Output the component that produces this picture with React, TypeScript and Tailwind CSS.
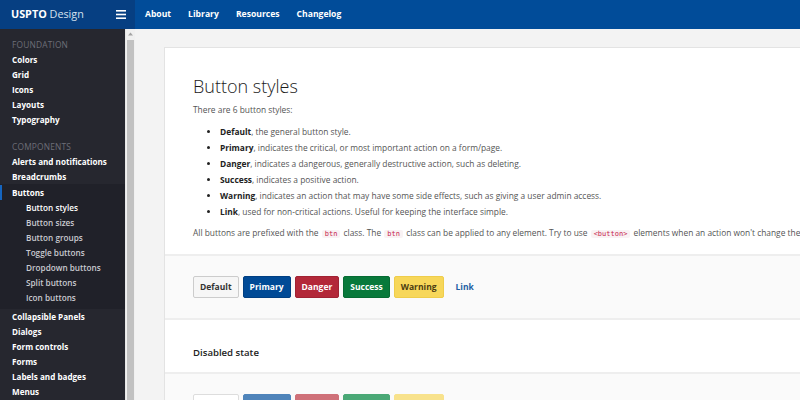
import React from "react";

const F = { fontFamily: '"Open Sans", "Noto Sans", sans-serif' };

function NavItem({ label, sub = false, active = false }: { label: string; sub?: boolean; active?: boolean }) {
  return (
    <div
      className={
        "h-[15px] leading-[15px] whitespace-nowrap " +
        (sub
          ? "pl-[26px] text-[8.2px] font-semibold " + (active ? "text-white" : "text-[#c9cad0]")
          : "pl-[12px] text-[8.1px] font-bold text-white")
      }
    >
      {label}
    </div>
  );
}

function Heading({ label }: { label: string }) {
  return (
    <div className="h-[15px] leading-[15px] pl-[12px] text-[8.4px] uppercase text-[#6d6e77] tracking-[0.02em]">{label}</div>
  );
}

function Btn({ label, cls }: { label: string; cls: string }) {
  return (
    <div className={"h-[22px] px-[6px] flex items-center rounded-[2px] border text-[8.5px] font-bold " + cls}>{label}</div>
  );
}

function Code({ children }: { children: React.ReactNode }) {
  return (
    <span className="px-[3px] mx-[1px] rounded-[2px] bg-[#f9f2f4] text-[#c7254e] text-[7px]" style={{ fontFamily: '"DejaVu Sans Mono", monospace' }}>
      {children}
    </span>
  );
}

export default function App() {
  return (
    <div className="w-[800px] h-[400px] overflow-hidden flex flex-col bg-[#f3f3f3]" style={F}>
      {/* Header */}
      <div className="h-[29px] flex shrink-0 bg-[#014c99]">
        <div className="w-[135px] bg-[#063f82] flex items-center pl-[11px] pr-[9px] justify-between">
          <div className="text-[10.8px] text-white whitespace-nowrap">
            <span className="font-bold">USPTO</span> <span className="text-[#d8e2ef]">Design</span>
          </div>
          <svg width="10" height="9" viewBox="0 0 10 9">
            <rect x="0" y="0" width="10" height="1.6" fill="white" />
            <rect x="0" y="3.7" width="10" height="1.6" fill="white" />
            <rect x="0" y="7.4" width="10" height="1.6" fill="white" />
          </svg>
        </div>
        <div className="flex items-center gap-[17px] pl-[10px] text-white text-[8.6px] font-bold">
          <span>About</span>
          <span>Library</span>
          <span>Resources</span>
          <span>Changelog</span>
        </div>
      </div>

      <div className="flex flex-1 min-h-0">
        {/* Sidebar */}
        <div className="w-[125px] shrink-0 bg-[#26272f] pt-[8px] overflow-hidden">
          <Heading label="Foundation" />
          <NavItem label="Colors" />
          <NavItem label="Grid" />
          <NavItem label="Icons" />
          <NavItem label="Layouts" />
          <NavItem label="Typography" />
          <div className="h-[12px]" />
          <Heading label="Components" />
          <NavItem label="Alerts and notifications" />
          <NavItem label="Breadcrumbs" />
          <div className="bg-[#202129] pt-[1px] pb-[4px]">
            <div className="relative">
              <div className="absolute left-0 top-0 w-[2px] h-[15px] bg-[#1565c0]" />
              <NavItem label="Buttons" />
            </div>
            <NavItem label="Button styles" sub active />
            <NavItem label="Button sizes" sub />
            <NavItem label="Button groups" sub />
            <NavItem label="Toggle buttons" sub />
            <NavItem label="Dropdown buttons" sub />
            <NavItem label="Split buttons" sub />
            <NavItem label="Icon buttons" sub />
          </div>
          <NavItem label="Collapsible Panels" />
          <NavItem label="Dialogs" />
          <NavItem label="Form controls" />
          <NavItem label="Forms" />
          <NavItem label="Labels and badges" />
          <NavItem label="Menus" />
        </div>

        {/* Scrollbar */}
        <div className="w-[10px] shrink-0 bg-[#f0f0f0] border-l border-[#e6e6e6] flex flex-col items-center">
          <svg width="7" height="11" viewBox="0 0 7 11" className="shrink-0">
            <path d="M1 6.5 L3.5 3.5 L6 6.5 Z" fill="#a3a3a3" />
          </svg>
          <div className="w-[7px] flex-1 bg-[#c1c1c1]" />
        </div>

        {/* Main */}
        <div className="flex-1 min-w-0 overflow-hidden pl-[29px] pt-[18px]">
          <div className="w-[900px] bg-white border border-[#e3e3e3]">
            <div className="px-[28px] pt-[26px] pb-[12px]">
              <div className="text-[18px] leading-[24px] font-light text-[#1b1b1b]">Button styles</div>
              <div className="mt-[4px] text-[8.4px] leading-[16px] text-[#555]">There are 6 button styles:</div>
              <ul className="mt-[6px] pl-[27px] list-disc text-[8.4px] leading-[16px] text-[#555] marker:text-[#222]">
                <li><b className="text-[#222]">Default</b>, the general button style.</li>
                <li><b className="text-[#222]">Primary</b>, indicates the critical, or most important action on a form/page.</li>
                <li><b className="text-[#222]">Danger</b>, indicates a dangerous, generally destructive action, such as deleting.</li>
                <li><b className="text-[#222]">Success</b>, indicates a positive action.</li>
                <li><b className="text-[#222]">Warning</b>, indicates an action that may have some side effects, such as giving a user admin access.</li>
                <li><b className="text-[#222]">Link</b>, used for non-critical actions. Useful for keeping the interface simple.</li>
              </ul>
              <div className="mt-[5px] text-[8.4px] leading-[16px] text-[#555] whitespace-nowrap">
                All buttons are prefixed with the <Code>btn</Code> class. The <Code>btn</Code> class can be applied to any element. Try to use <Code>&lt;button&gt;</Code> elements when an action won't change the page.
              </div>
            </div>
            <div className="border-t-2 border-[#eeeeee] bg-[#fafafa] px-[28px] py-[20px] flex items-center gap-[4px]">
              <Btn label="Default" cls="bg-[#f6f6f6] border-[#cccccc] text-[#333]" />
              <Btn label="Primary" cls="bg-[#004a96] border-[#003f82] text-white" />
              <Btn label="Danger" cls="bg-[#b32839] border-[#a02233] text-white" />
              <Btn label="Success" cls="bg-[#08793b] border-[#066b33] text-white" />
              <Btn label="Warning" cls="bg-[#f7d75a] border-[#efcd4b] text-[#4b3c12]" />
              <span className="ml-[8px] text-[8.5px] font-bold text-[#1d5fa3]">Link</span>
            </div>
            <div className="border-t-2 border-[#eeeeee] px-[28px] h-[54px] pt-[26px]">
              <div className="text-[9.6px] leading-[14px] font-semibold text-[#222]">Disabled state</div>
            </div>
            <div className="border-t-2 border-[#eeeeee] bg-[#fafafa] px-[28px] py-[20px] flex items-center gap-[4px]">
              <Btn label="Default" cls="bg-white border-[#dddddd] text-[#999]" />
              <Btn label="Primary" cls="bg-[#4f84ba] border-[#4f84ba] text-white" />
              <Btn label="Danger" cls="bg-[#cf7179] border-[#cf7179] text-white" />
              <Btn label="Success" cls="bg-[#4aa876] border-[#4aa876] text-white" />
              <Btn label="Warning" cls="bg-[#f8e28c] border-[#f8e28c] text-[#8a7a45]" />
            </div>
          </div>
        </div>
      </div>
    </div>
  );
}
